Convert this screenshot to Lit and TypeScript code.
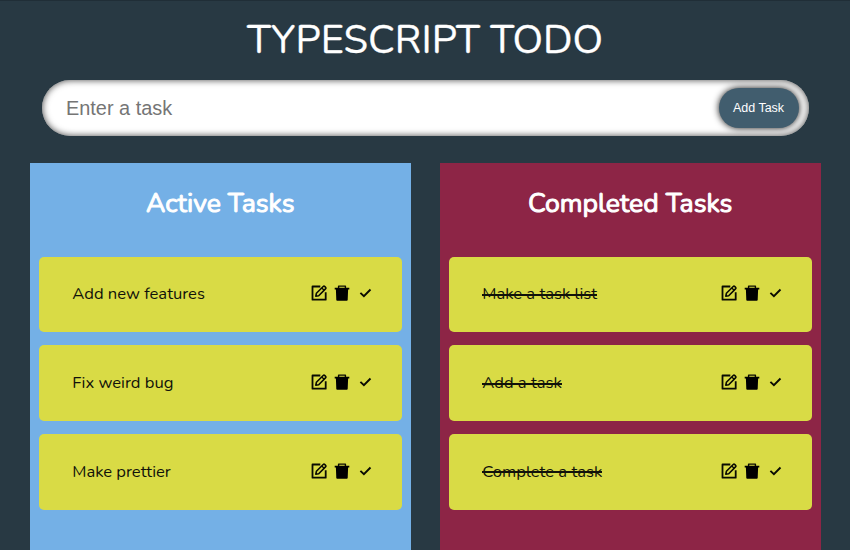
import { LitElement, html, css, svg } from "lit";
import { customElement, property } from "lit/decorators.js";

const editIcon = svg`<svg viewBox="0 0 16 16" width="16" height="16" fill="none" stroke="#0a0b02" stroke-width="1.8" stroke-linejoin="round">
  <path d="M9.3 1.5H1.5V14.7H14.7V7.3"/>
  <path d="M4.8 11.2L5.4 8.3L12.2 1.5Q13 .8 13.9 1.6L14.5 2.2Q15.3 3.1 14.5 3.9L7.7 10.7Z" stroke-width="1.6"/>
  <path d="M10.8 3L13.1 5.3" stroke-width="1.3"/>
</svg>`;

const trashIcon = svg`<svg viewBox="0 0 16 16" width="16" height="16">
  <path d="M4.6 3V1.1H11.4V3" fill="none" stroke="#0a0b02" stroke-width="1.4" stroke-linejoin="round"/>
  <path d="M.7 2.7H15.3V4.5H14.1L13.7 15Q13.6 15.8 12.8 15.8H3.2Q2.4 15.8 2.3 15L1.9 4.5H.7Z" fill="#000"/>
</svg>`;

const checkIcon = svg`<svg viewBox="0 0 16 16" width="16" height="16">
  <path d="M2.4 7.9L5.9 11.2L12.5 4.5" fill="none" stroke="#0a0b02" stroke-width="1.9"/>
</svg>`;

@customElement("task-card")
export class TaskCard extends LitElement {
  @property() name = "";
  @property({ type: Boolean }) done = false;

  static styles = css`
    :host {
      display: flex;
      align-items: center;
      box-sizing: border-box;
      height: 75.6px;
      padding: 0 28px 0 33.4px;
      border-radius: 5px;
      background: #d9db45;
      color: #11120a;
      font-size: 16.6px;
      line-height: 24px;
    }
    .name {
      flex: 1;
      white-space: nowrap;
    }
    .name s {
      text-decoration: none;
      background: linear-gradient(#11120a, #11120a) 0 11.5px / 100% 2px no-repeat;
    }
    .actions {
      display: flex;
      gap: 7.2px;
      padding-bottom: 2.4px;
    }
    svg {
      display: block;
    }
  `;

  render() {
    return html`
      <span class="name">${this.done ? html`<s>${this.name}</s>` : this.name}</span>
      <span class="actions">${editIcon}${trashIcon}${checkIcon}</span>
    `;
  }
}

@customElement("app-root")
export class AppRoot extends LitElement {
  private active = ["Add new features", "Fix weird bug", "Make prettier"];
  private completed = ["Make a task list", "Add a task", "Complete a task"];

  static styles = css`
    :host {
      display: flex;
      flex-direction: column;
      align-items: center;
      box-sizing: border-box;
      width: 850px;
      height: 550px;
      overflow: hidden;
      background: #283943;
      border-top: 1px solid #202e37;
      font-family: Nunito, Lato, sans-serif;
    }
    h1 {
      margin: 15px 0 0;
      height: 48px;
      font-size: 39.8px;
      line-height: 48px;
      font-weight: 400;
      color: #fff;
      -webkit-text-stroke: 0.3px #fff;
      white-space: nowrap;
    }
    .entry {
      display: flex;
      align-items: center;
      box-sizing: border-box;
      width: 767px;
      height: 56px;
      margin-top: 16px;
      padding: 0 10px 0 24.5px;
      border-radius: 28px;
      background: #fff;
      box-shadow: inset 0 0 7px #444;
      overflow: hidden;
    }
    input {
      flex: 1;
      min-width: 0;
      padding: 0;
      border: 0;
      outline: 0;
      background: none;
      font: 19.9px "Liberation Sans", Arial, sans-serif;
    }
    input::placeholder {
      color: #757575;
    }
    button {
      width: 80px;
      height: 40px;
      padding: 0;
      border: 0;
      border-radius: 20px;
      background: #415d6e;
      box-shadow: 0 0 7px #111;
      color: #fff;
      font: 12.5px "Liberation Sans", Arial, sans-serif;
    }
    .columns {
      display: flex;
      gap: 29px;
      width: 791px;
      margin-top: 26.6px;
      flex: 1;
    }
    .column {
      flex: 1;
      box-sizing: border-box;
      padding: 23px 8.9px 0 9.3px;
    }
    .active {
      background: #74b0e6;
    }
    .completed {
      background: #8d2546;
    }
    h2 {
      margin: 0;
      height: 71px;
      color: #fff;
      font-size: 26.6px;
      line-height: 34px;
      font-weight: 400;
      -webkit-text-stroke: 1px #fff;
      text-align: center;
      white-space: nowrap;
    }
    .list {
      display: flex;
      flex-direction: column;
      gap: 13.2px;
    }
  `;

  render() {
    return html`
      <h1>TYPESCRIPT TODO</h1>
      <div class="entry">
        <input placeholder="Enter a task" />
        <button>Add Task</button>
      </div>
      <div class="columns">
        <section class="column active">
          <h2>Active Tasks</h2>
          <div class="list">${this.active.map((t) => html`<task-card .name=${t}></task-card>`)}</div>
        </section>
        <section class="column completed">
          <h2>Completed Tasks</h2>
          <div class="list">${this.completed.map((t) => html`<task-card .name=${t} done></task-card>`)}</div>
        </section>
      </div>
    `;
  }
}
